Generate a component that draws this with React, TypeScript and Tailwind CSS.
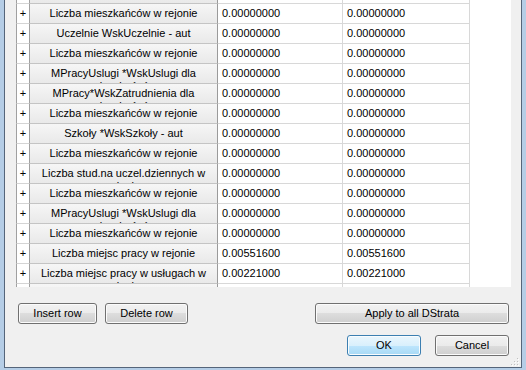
import React from "react";

type Row = { h: string; h2?: string; a: string; b: string; plus: boolean };

const rows: Row[] = [
  { h: "", a: "", b: "", plus: false },
  { h: "Liczba mieszkańców w rejonie", a: "0.00000000", b: "0.00000000", plus: true },
  { h: "Uczelnie WskUczelnie - aut", a: "0.00000000", b: "0.00000000", plus: true },
  { h: "Liczba mieszkańców w rejonie", a: "0.00000000", b: "0.00000000", plus: true },
  { h: "MPracyUslugi *WskUslugi dla", h2: "mieszkańców", a: "0.00000000", b: "0.00000000", plus: true },
  { h: "MPracy*WskZatrudnienia dla", h2: "mieszkańców", a: "0.00000000", b: "0.00000000", plus: true },
  { h: "Liczba mieszkańców w rejonie", a: "0.00000000", b: "0.00000000", plus: true },
  { h: "Szkoły *WskSzkoły - aut", a: "0.00000000", b: "0.00000000", plus: true },
  { h: "Liczba mieszkańców w rejonie", a: "0.00000000", b: "0.00000000", plus: true },
  { h: "Liczba stud.na uczel.dziennych w", h2: "rejonie", a: "0.00000000", b: "0.00000000", plus: true },
  { h: "Liczba mieszkańców w rejonie", a: "0.00000000", b: "0.00000000", plus: true },
  { h: "MPracyUslugi *WskUslugi dla", h2: "mieszkańców", a: "0.00000000", b: "0.00000000", plus: true },
  { h: "Liczba mieszkańców w rejonie", a: "0.00000000", b: "0.00000000", plus: true },
  { h: "Liczba miejsc pracy w rejonie", a: "0.00551600", b: "0.00551600", plus: true },
  { h: "Liczba miejsc pracy w usługach w", h2: "rejonie", a: "0.00221000", b: "0.00221000", plus: true },
  { h: "", a: "", b: "", plus: false },
];

function Btn({ label, w, def }: { label: string; w: string; def?: boolean }) {
  return (
    <div
      className={
        "h-[21px] rounded-[3px] border flex items-center justify-center text-[11px] text-black " +
        w +
        (def
          ? " border-[#3c7fb1] bg-[linear-gradient(#eaf6fd_0%,#d9f0fc_50%,#bee6fd_50%,#a7d9f5_100%)] shadow-[inset_0_0_0_1px_#f8fcfe]"
          : " border-[#707070] bg-[linear-gradient(#f2f2f2_0%,#ebebeb_50%,#dddddd_50%,#cfcfcf_100%)] shadow-[inset_0_0_0_1px_#fbfbfb]")
      }
    >
      {label}
    </div>
  );
}

export default function App() {
  return (
    <div
      className="w-[526px] h-[370px] overflow-hidden bg-[#b5cde6] pl-[4px] pr-[4px] pb-[2px]"
      style={{ fontFamily: '"Liberation Sans", Arial, sans-serif' }}
    >
      <div className="h-[368px] bg-[#f0f0f0] border-l border-r border-b border-[#55657a] flex flex-col">
        <div className="ml-[11px] mr-[10px] h-[287px] bg-white overflow-hidden">
          <div className="-mt-[16px] flex flex-col">
            {rows.map((r, i) => (
              <div key={i} className="flex h-[20px] text-[11px] text-black leading-[13px]">
                <div className="w-[14px] shrink-0 border-l border-r border-l-[#a0a0a0] border-r-[#a0a0a0] border-b border-b-[#d4d4d4] bg-white flex items-center justify-center">
                  {r.plus ? "+" : ""}
                </div>
                <div className="w-[188px] shrink-0 border-r border-r-[#9a9a9a] border-b border-b-[#c4c4c4] bg-[linear-gradient(#f6f6f6,#e9e9e9)] overflow-hidden text-center pt-[3px]">
                  <div className="whitespace-nowrap">{r.h}</div>
                  {r.h2 ? <div className="whitespace-nowrap">{r.h2}</div> : null}
                </div>
                <div className="w-[125px] shrink-0 border-r border-b border-[#d8d8d8] pl-[4px] pt-[3px] whitespace-nowrap">
                  {r.a}
                </div>
                <div className="w-[127px] shrink-0 border-r border-b border-[#d8d8d8] pl-[4px] pt-[3px] whitespace-nowrap">
                  {r.b}
                </div>
              </div>
            ))}
          </div>
        </div>
        <div className="mt-[16px] flex items-center pl-[13px] pr-[12px]">
          <Btn label="Insert row" w="w-[79px]" />
          <div className="w-[8px]" />
          <Btn label="Delete row" w="w-[83px]" />
          <div className="flex-1" />
          <Btn label="Apply to all DStrata" w="w-[194px]" />
        </div>
        <div className="mt-[11px] flex items-center justify-end pr-[12px]">
          <Btn label="OK" w="w-[74px]" def />
          <div className="w-[14px]" />
          <Btn label="Cancel" w="w-[74px]" />
        </div>
        <div className="flex-1 flex items-end justify-end pr-[2px] pb-[1px]">
          <svg width="10" height="10" viewBox="0 0 10 10">
            {[
              [8, 2],
              [8, 5],
              [5, 5],
              [8, 8],
              [5, 8],
              [2, 8],
            ].map(([x, y], k) => (
              <g key={k}>
                <rect x={x} y={y} width="1" height="1" fill="#c0c0c0" />
                <rect x={x + 1} y={y + 1} width="1" height="1" fill="#ffffff" />
              </g>
            ))}
          </svg>
        </div>
      </div>
    </div>
  );
}
